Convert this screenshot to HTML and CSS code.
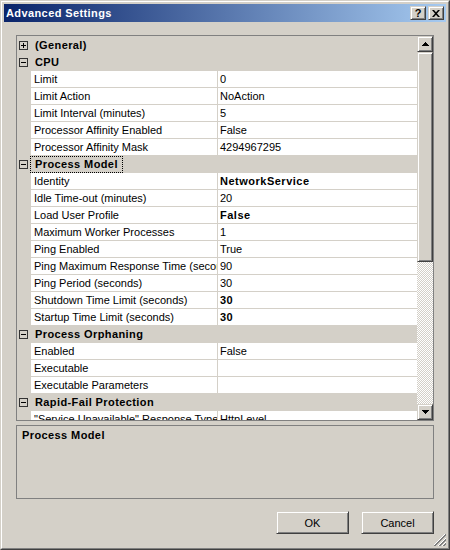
FILE: index.html
```html
<!DOCTYPE html>
<html>
<head>
<meta charset="utf-8">
<link rel="stylesheet" href="styles.css">
</head>
<body>
<div class="window">
  <div class="frame">
    <div class="titlebar">
      <span class="title">Advanced Settings</span>
      <div class="tbtns">
        <div class="tbtn help">?</div>
        <div class="tbtn"><svg width="8" height="7" viewBox="0 0 8 7"><path d="M0 0h2l2 2.3L6 0h2L5 3.5 8 7H6L4 4.7 2 7H0l3-3.5z" fill="#000"/></svg></div>
      </div>
    </div>
    <div class="client">
      <div class="grid">
        <div class="rows">
          <div class="cat"><svg class="exp" width="9" height="9" viewBox="0 0 9 9"><rect x="0.5" y="0.5" width="8" height="8" fill="none" stroke="#333"/><path d="M2 4.5h5M4.5 2v5" stroke="#000"/></svg><span class="cat-name">(General)</span></div>
          <div class="cat"><svg class="exp" width="9" height="9" viewBox="0 0 9 9"><rect x="0.5" y="0.5" width="8" height="8" fill="none" stroke="#333"/><path d="M2 4.5h5" stroke="#000"/></svg><span class="cat-name">CPU</span></div>
          <div class="prop"><span class="lbl">Limit</span><span class="val">0</span></div>
          <div class="prop"><span class="lbl">Limit Action</span><span class="val">NoAction</span></div>
          <div class="prop"><span class="lbl">Limit Interval (minutes)</span><span class="val">5</span></div>
          <div class="prop"><span class="lbl">Processor Affinity Enabled</span><span class="val">False</span></div>
          <div class="prop"><span class="lbl">Processor Affinity Mask</span><span class="val">4294967295</span></div>
          <div class="cat"><svg class="exp" width="9" height="9" viewBox="0 0 9 9"><rect x="0.5" y="0.5" width="8" height="8" fill="none" stroke="#333"/><path d="M2 4.5h5" stroke="#000"/></svg><span class="cat-name focused">Process Model</span></div>
          <div class="prop"><span class="lbl">Identity</span><span class="val bold">NetworkService</span></div>
          <div class="prop"><span class="lbl">Idle Time-out (minutes)</span><span class="val">20</span></div>
          <div class="prop"><span class="lbl">Load User Profile</span><span class="val bold">False</span></div>
          <div class="prop"><span class="lbl">Maximum Worker Processes</span><span class="val">1</span></div>
          <div class="prop"><span class="lbl">Ping Enabled</span><span class="val">True</span></div>
          <div class="prop"><span class="lbl">Ping Maximum Response Time (seconds)</span><span class="val">90</span></div>
          <div class="prop"><span class="lbl">Ping Period (seconds)</span><span class="val">30</span></div>
          <div class="prop"><span class="lbl">Shutdown Time Limit (seconds)</span><span class="val bold">30</span></div>
          <div class="prop"><span class="lbl">Startup Time Limit (seconds)</span><span class="val bold">30</span></div>
          <div class="cat"><svg class="exp" width="9" height="9" viewBox="0 0 9 9"><rect x="0.5" y="0.5" width="8" height="8" fill="none" stroke="#333"/><path d="M2 4.5h5" stroke="#000"/></svg><span class="cat-name">Process Orphaning</span></div>
          <div class="prop"><span class="lbl">Enabled</span><span class="val">False</span></div>
          <div class="prop"><span class="lbl">Executable</span><span class="val"></span></div>
          <div class="prop"><span class="lbl">Executable Parameters</span><span class="val"></span></div>
          <div class="cat"><svg class="exp" width="9" height="9" viewBox="0 0 9 9"><rect x="0.5" y="0.5" width="8" height="8" fill="none" stroke="#333"/><path d="M2 4.5h5" stroke="#000"/></svg><span class="cat-name">Rapid-Fail Protection</span></div>
          <div class="prop"><span class="lbl">"Service Unavailable" Response Type</span><span class="val">HttpLevel</span></div>
        </div>
        <div class="scrollbar">
          <div class="sbtn"><svg width="7" height="4" viewBox="0 0 7 4"><path d="M3 0h1v1h1v1h1v1h1v1H0V3h1V2h1V1h1z" fill="#000"/></svg></div>
          <div class="thumb"></div>
          <div class="track"></div>
          <div class="sbtn"><svg width="7" height="4" viewBox="0 0 7 4"><path d="M0 0h7v1H6v1H5v1H4v1H3V3H2V2H1V1H0z" fill="#000"/></svg></div>
        </div>
      </div>
      <div class="desc"><span class="desc-title">Process Model</span></div>
      <div class="buttons">
        <div class="btn">OK</div>
        <div class="btn">Cancel</div>
      </div>
      <svg class="grip" width="12" height="12" viewBox="0 0 12 12" shape-rendering="crispEdges">
        <path d="M11 0L0 11" stroke="#fff"/>
        <path d="M12 0L0 12M12 1L1 12" stroke="#808080"/>
        <path d="M12 4L4 12" stroke="#fff"/>
        <path d="M12 5L5 12M12 6L6 12" stroke="#808080"/>
        <path d="M12 8L8 12" stroke="#fff"/>
        <path d="M12 9L9 12M12 10L10 12" stroke="#808080"/>
      </svg>
    </div>
  </div>
</div>
</body>
</html>
```
FILE: styles.css
```css
html, body {
  margin: 0;
  padding: 0;
  background: #D4D0C8;
}
body {
  font-family: "Liberation Sans", Arial, sans-serif;
  font-size: 11px;
  color: #000;
}
.window {
  width: 450px;
  height: 550px;
  box-sizing: border-box;
  border: 1px solid;
  border-color: #D4D0C8 #404040 #404040 #D4D0C8;
}
.frame {
  height: 100%;
  box-sizing: border-box;
  border: 1px solid;
  border-color: #FFFFFF #808080 #808080 #FFFFFF;
  padding: 2px;
  display: flex;
  flex-direction: column;
}
.titlebar {
  height: 18px;
  flex: none;
  display: flex;
  align-items: center;
  padding: 0 2px;
  background: linear-gradient(to right, #0A246A, #A6CAF0);
}
.title {
  color: #fff;
  font-weight: bold;
  letter-spacing: 0.4px;
}
.tbtns {
  margin-left: auto;
  display: flex;
  gap: 2px;
}
.tbtn, .sbtn, .thumb, .btn {
  box-sizing: border-box;
  background: #D4D0C8;
  border: 1px solid;
  border-color: #D4D0C8 #404040 #404040 #D4D0C8;
  box-shadow: inset 1px 1px #FFFFFF, inset -1px -1px #808080;
}
.tbtn {
  width: 16px;
  height: 14px;
  display: flex;
  align-items: center;
  justify-content: center;
}
.help {
  font-weight: bold;
  font-size: 11px;
  line-height: 12px;
}
.client {
  flex: 1;
  display: flex;
  flex-direction: column;
  padding: 13px 12px 12px;
  position: relative;
}
.grid {
  height: 386px;
  flex: none;
  box-sizing: border-box;
  border: 1px solid #808080;
  display: flex;
  background: #D4D0C8;
}
.rows {
  flex: 1;
  overflow: hidden;
  padding-top: 1px;
}
.cat {
  display: flex;
  align-items: center;
  height: 17px;
}
.exp {
  margin-left: 2px;
  flex: none;
}
.cat-name {
  margin-left: 2px;
  height: 17px;
  box-sizing: border-box;
  border: 1px dotted transparent;
  padding: 0 4px;
  line-height: 15px;
  font-weight: bold;
  letter-spacing: 0.4px;
  white-space: nowrap;
}
.cat-name.focused {
  border-color: #000;
}
.prop {
  display: flex;
  height: 17px;
  padding-left: 14px;
}
.lbl, .val {
  height: 17px;
  box-sizing: border-box;
  background: #fff;
  border-bottom: 1px solid #D4D0C8;
  line-height: 16px;
  white-space: nowrap;
  overflow: hidden;
}
.lbl {
  width: 187px;
  flex: none;
  border-right: 1px solid #D4D0C8;
  padding-left: 3px;
}
.val {
  flex: 1;
  padding-left: 2px;
}
.bold {
  font-weight: bold;
  letter-spacing: 0.5px;
}
.scrollbar {
  width: 16px;
  flex: none;
  display: flex;
  flex-direction: column;
}
.sbtn {
  height: 16px;
  flex: none;
  display: flex;
  align-items: center;
  justify-content: center;
}
.thumb {
  height: 210px;
  flex: none;
}
.track {
  flex: 1;
  background-image: conic-gradient(#FFFFFF 25%, #D4D0C8 0 50%, #FFFFFF 0 75%, #D4D0C8 0);
  background-size: 2px 2px;
}
.desc {
  margin-top: 4px;
  height: 74px;
  flex: none;
  box-sizing: border-box;
  border: 1px solid #808080;
  padding: 2px 5px;
  line-height: 14px;
}
.desc-title {
  font-weight: bold;
  letter-spacing: 0.4px;
}
.buttons {
  margin-top: 12px;
  display: flex;
  justify-content: flex-end;
  gap: 12px;
}
.btn {
  width: 73px;
  height: 23px;
  display: flex;
  align-items: center;
  justify-content: center;
}
.grip {
  position: absolute;
  right: 0;
  bottom: 0;
}
```
